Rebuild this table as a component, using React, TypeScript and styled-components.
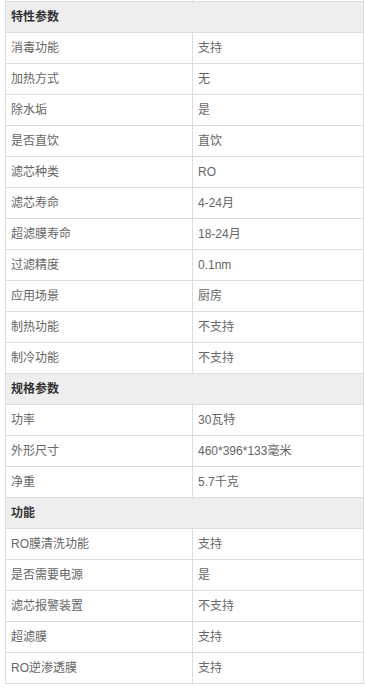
import React from "react";
import styled, { createGlobalStyle } from "styled-components";

const Global = createGlobalStyle`
  html, body { margin: 0; padding: 0; background: #ffffff; }
  body { font-family: "Liberation Sans", "Noto Sans CJK SC", sans-serif; }
`;

const Page = styled.div`
  padding-left: 5px;
  overflow: hidden;
  height: 689px;
`;

const Table = styled.table`
  margin-top: -30px;
  width: 359px;
  border-collapse: collapse;
  table-layout: fixed;
  font-size: 12px;
  color: #666666;
`;

const Cell = styled.td<{ $head?: boolean }>`
  height: 31px;
  padding: 0 0 0 5px;
  border: 1px solid #dddddd;
  box-sizing: border-box;
  vertical-align: middle;
  line-height: 16px;
  background: ${(p) => (p.$head ? "#eeeeee" : "#ffffff")};
  color: ${(p) => (p.$head ? "#333333" : "#666666")};
  font-weight: ${(p) => (p.$head ? 700 : 400)};
  white-space: nowrap;
`;

const LeftCol = styled.col`
  width: 187px;
`;

type Section = { title: string; rows: [string, string][] };

const sections: Section[] = [
  {
    title: "特性参数",
    rows: [
      ["消毒功能", "支持"],
      ["加热方式", "无"],
      ["除水垢", "是"],
      ["是否直饮", "直饮"],
      ["滤芯种类", "RO"],
      ["滤芯寿命", "4-24月"],
      ["超滤膜寿命", "18-24月"],
      ["过滤精度", "0.1nm"],
      ["应用场景", "厨房"],
      ["制热功能", "不支持"],
      ["制冷功能", "不支持"],
    ],
  },
  {
    title: "规格参数",
    rows: [
      ["功率", "30瓦特"],
      ["外形尺寸", "460*396*133毫米"],
      ["净重", "5.7千克"],
    ],
  },
  {
    title: "功能",
    rows: [
      ["RO膜清洗功能", "支持"],
      ["是否需要电源", "是"],
      ["滤芯报警装置", "不支持"],
      ["超滤膜", "支持"],
      ["RO逆渗透膜", "支持"],
    ],
  },
];

export default function App() {
  return (
    <>
      <Global />
      <Page>
        <Table>
          <colgroup>
            <LeftCol />
            <col />
          </colgroup>
          <tbody>
            <tr>
              <Cell></Cell>
              <Cell></Cell>
            </tr>
            {sections.map((s) => (
              <React.Fragment key={s.title}>
                <tr>
                  <Cell $head colSpan={2}>
                    {s.title}
                  </Cell>
                </tr>
                {s.rows.map(([k, v]) => (
                  <tr key={k}>
                    <Cell>{k}</Cell>
                    <Cell>{v}</Cell>
                  </tr>
                ))}
              </React.Fragment>
            ))}
          </tbody>
        </Table>
      </Page>
    </>
  );
}
